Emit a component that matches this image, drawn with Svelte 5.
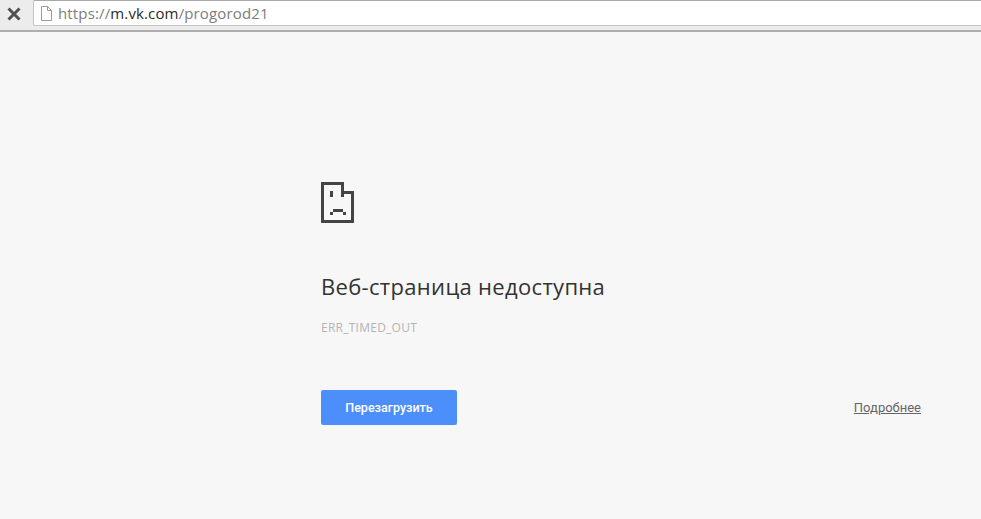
<script>
  const url = { scheme: 'https://', host: 'm.vk.com', path: '/progorod21' };
</script>

<div class="page">
  <header class="toolbar">
    <svg class="close" width="14" height="14" viewBox="0 0 14 14" aria-hidden="true">
      <path d="M1.5 1.5 12.5 12.5M12.5 1.5 1.5 12.5" stroke="#505050" stroke-width="3" fill="none" />
    </svg>
    <div class="omnibox">
      <svg class="doc" width="12" height="15" viewBox="0 0 12 15" aria-hidden="true">
        <path d="M1.5 .5H7.5L11.5 4.5V14.5H1.5ZM7.5 .5V4.5H11.5" fill="#fff" stroke="#9a9a9a" />
      </svg>
      <span class="url"><span class="dim">{url.scheme}</span><span class="host">{url.host}</span><span class="dim">{url.path}</span></span>
    </div>
  </header>

  <main class="content">
    <svg class="sad" width="36" height="44" viewBox="0 0 36 44" shape-rendering="crispEdges" aria-hidden="true">
      <path fill="#444" fill-rule="evenodd" d="M0 0H20V3H3V38H30V12H33V41H0ZM20 0H23V3H26V6H29V9H33V12H23V15H20ZM23 3V9H29V6H26V3ZM9 9H12V15H9ZM12 27H22V30H12ZM9 30H12V33H9ZM22 30H25V33H22Z" />
    </svg>
    <h1>Веб-страница недоступна</h1>
    <p class="code">ERR_TIMED_OUT</p>
    <div class="actions">
      <button type="button">Перезагрузить</button>
      <a href="#details">Подробнее</a>
    </div>
  </main>
</div>

<style>
  :global(body) {
    margin: 0;
    background: #f7f7f7;
  }
  .page {
    height: 519px;
    display: flex;
    flex-direction: column;
    overflow: hidden;
    font-family: "Open Sans", "Noto Sans", sans-serif;
  }
  .toolbar {
    height: 32px;
    flex: none;
    box-sizing: border-box;
    display: flex;
    align-items: flex-start;
    background: #ececec;
    border-bottom: 2px solid #aeaeae;
  }
  .close {
    margin: 7px 0 0 7px;
    flex: none;
  }
  .omnibox {
    margin-left: 12px;
    flex: 1;
    height: 26px;
    box-sizing: border-box;
    display: flex;
    align-items: center;
    background: #fff;
    border: 1px solid #c4c4c4;
    border-right: 0;
    border-top-color: #a8a8a8;
    border-radius: 2px 0 0 2px;
  }
  .doc {
    margin-left: 6px;
    flex: none;
  }
  .url {
    margin-left: 6px;
    font-size: 15px;
    line-height: 24px;
    letter-spacing: 0.14px;
  }
  .dim {
    color: #7d7d7d;
  }
  .host {
    color: #2a2a2a;
  }
  .content {
    flex: 1;
    box-sizing: border-box;
    padding: 150px 60px 0 321px;
  }
  .sad {
    display: block;
  }
  h1 {
    margin: 42px 0 0;
    font-size: 22px;
    font-weight: 400;
    line-height: 36px;
    color: #333;
    letter-spacing: 0.32px;
  }
  .code {
    margin: 15px 0 0;
    font-size: 12px;
    line-height: 18px;
    color: #b4b4b4;
    letter-spacing: 0.25px;
  }
  .actions {
    margin-top: 53px;
    display: flex;
    align-items: center;
    justify-content: space-between;
  }
  button {
    width: 136px;
    height: 35px;
    padding: 0;
    border: 0;
    border-radius: 2px;
    background: #4c8efa;
    color: #fff;
    font: 500 12.5px "Roboto", sans-serif;
  }
  a {
    font: 13px "Roboto", sans-serif;
    color: #666;
    text-decoration: underline;
  }
</style>
